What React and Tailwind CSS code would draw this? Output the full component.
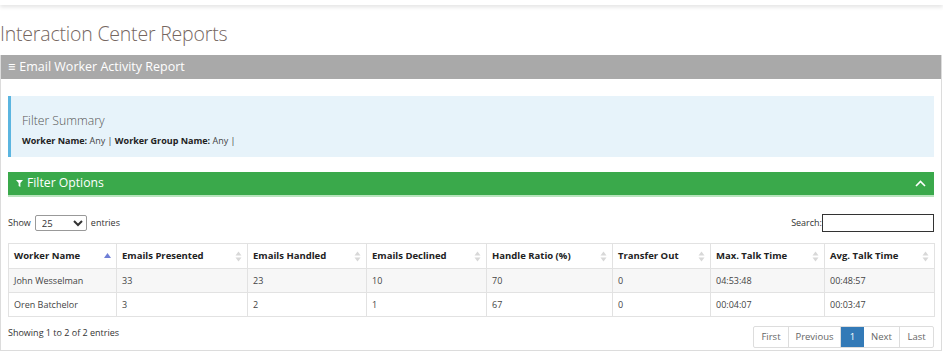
import { useState } from 'react';

const cols = [
  { key: 'name', label: 'Worker Name', w: 'w-[108px]', sorted: true },
  { key: 'presented', label: 'Emails Presented', w: 'w-[131px]' },
  { key: 'handled', label: 'Emails Handled', w: 'w-[119px]' },
  { key: 'declined', label: 'Emails Declined', w: 'w-[120px]' },
  { key: 'ratio', label: 'Handle Ratio (%)', w: 'w-[126px]' },
  { key: 'transfer', label: 'Transfer Out', w: 'w-[98px]' },
  { key: 'maxTalk', label: 'Max. Talk Time', w: 'w-[114px]' },
  { key: 'avgTalk', label: 'Avg. Talk Time', w: '' },
];

const rows = [
  { name: 'John Wesselman', presented: '33', handled: '23', declined: '10', ratio: '70', transfer: '0', maxTalk: '04:53:48', avgTalk: '00:48:57' },
  { name: 'Oren Batchelor', presented: '3', handled: '2', declined: '1', ratio: '67', transfer: '0', maxTalk: '00:04:07', avgTalk: '00:03:47' },
];

function SortIcon({ active }) {
  if (active) {
    return (
      <svg width="7" height="6" viewBox="0 0 7 6" className="shrink-0">
        <path d="M3.5 0 L7 5 L0 5 Z" fill="#6f7fd6" />
      </svg>
    );
  }
  return (
    <svg width="7" height="11" viewBox="0 0 7 11" className="shrink-0">
      <path d="M3.5 0.5 L6.5 4.5 L0.5 4.5 Z" fill="#d8d8d8" />
      <path d="M3.5 10.5 L6.5 6.5 L0.5 6.5 Z" fill="#d8d8d8" />
    </svg>
  );
}

export default function App() {
  const [pageSize, setPageSize] = useState('25');
  const [query, setQuery] = useState('');

  return (
    <div className="w-[943px] h-[357px] bg-white overflow-hidden font-['Open_Sans','Liberation_Sans',sans-serif] text-[#333]">
      <div className="h-[5px] bg-white shadow-[0_2px_4px_rgba(0,0,0,0.12)]" />

      <h1 className="mt-[16px] h-[34px] text-[19.5px] font-light leading-[26px] text-[#75665f] tracking-[-0.2px]">
        Interaction Center Reports
      </h1>

      <div className="w-[942px] border-r border-b border-l border-[#dcdcdc] h-[296px]">
        <div className="h-[24px] bg-[#a9a9a9] flex items-center px-[7px] text-white text-[12.5px]">
          <span className="mr-[4px] leading-none">≡</span>
          Email Worker Activity Report
        </div>

        <div className="px-[7px] pt-[17px]">
          <div className="h-[61px] bg-[#e7f3fa] border-l-[3px] border-[#5bb5e0] pl-[11px] pt-[16px]">
            <div className="text-[12.2px] font-light text-[#555] leading-[18px]">Filter Summary</div>
            <div className="mt-[4px] text-[9px] text-[#444] leading-[14px]">
              <b className="font-bold text-[#222]">Worker Name:</b> Any | <b className="font-bold text-[#222]">Worker Group Name:</b> Any |
            </div>
          </div>

          <div className="mt-[15px] h-[25px] bg-[#3aa94b] border-b-[2px] border-[#b8e4bd] flex items-center justify-between pl-[8px] pr-[8px] text-white">
            <div className="flex items-center text-[12.2px]">
              <svg width="7" height="7" viewBox="0 0 8 8" className="mr-[4px] mt-[1px]">
                <path d="M0 0 H8 L5 3.5 V8 L3 6.8 V3.5 Z" fill="white" />
              </svg>
              Filter Options
            </div>
            <svg width="11" height="7" viewBox="0 0 11 7">
              <path d="M1 6 L5.5 1.5 L10 6" stroke="white" strokeWidth="1.6" fill="none" />
            </svg>
          </div>

          <div className="mt-[17px] flex items-center justify-between text-[9px] text-[#333]">
            <label className="flex items-center gap-[2px]">
              Show
              <select
                value={pageSize}
                onChange={(e) => setPageSize(e.target.value)}
                className="mx-[2px] w-[52px] h-[16px] border border-[#999] rounded-[2px] text-[9.5px] pl-[2px] bg-white"
              >
                <option>10</option>
                <option>25</option>
                <option>50</option>
                <option>100</option>
              </select>
              entries
            </label>
            <label className="flex items-center">
              Search:
              <input
                value={query}
                onChange={(e) => setQuery(e.target.value)}
                className="w-[112px] h-[18px] border border-[#333] bg-white outline-none"
              />
            </label>
          </div>

          <table className="mt-[11px] w-[927px] border-collapse text-[9px] table-fixed">
            <thead>
              <tr className="h-[25px]">
                {cols.map((c) => (
                  <th key={c.key} className={`${c.w} border border-[#e2e2e2] px-[5px] text-left text-[9.5px] font-bold text-[#222]`}>
                    <div className="flex items-center justify-between">
                      <span>{c.label}</span>
                      <SortIcon active={c.sorted} />
                    </div>
                  </th>
                ))}
              </tr>
            </thead>
            <tbody>
              {rows.map((r, i) => (
                <tr key={r.name} className={`h-[24px] ${i === 0 ? 'bg-[#f7f7f7]' : 'bg-white'}`}>
                  {cols.map((c) => (
                    <td key={c.key} className="border border-[#e2e2e2] px-[5px] text-[#444]">
                      {r[c.key]}
                    </td>
                  ))}
                </tr>
              ))}
            </tbody>
          </table>

          <div className="mt-[9px] flex items-start justify-between">
            <div className="pt-[1px] text-[9px] leading-[12px] text-[#333]">Showing 1 to 2 of 2 entries</div>
            <div className="flex h-[22px] text-[9.5px] text-[#666] border border-[#ddd] rounded-[2px]">
              <span className="w-[35px] flex items-center justify-center border-r border-[#ddd]">First</span>
              <span className="w-[52px] flex items-center justify-center border-r border-[#ddd]">Previous</span>
              <span className="w-[23px] flex items-center justify-center bg-[#337ab7] text-white">1</span>
              <span className="w-[36px] flex items-center justify-center border-r border-[#ddd]">Next</span>
              <span className="w-[33px] flex items-center justify-center">Last</span>
            </div>
          </div>
        </div>
      </div>
    </div>
  );
}
